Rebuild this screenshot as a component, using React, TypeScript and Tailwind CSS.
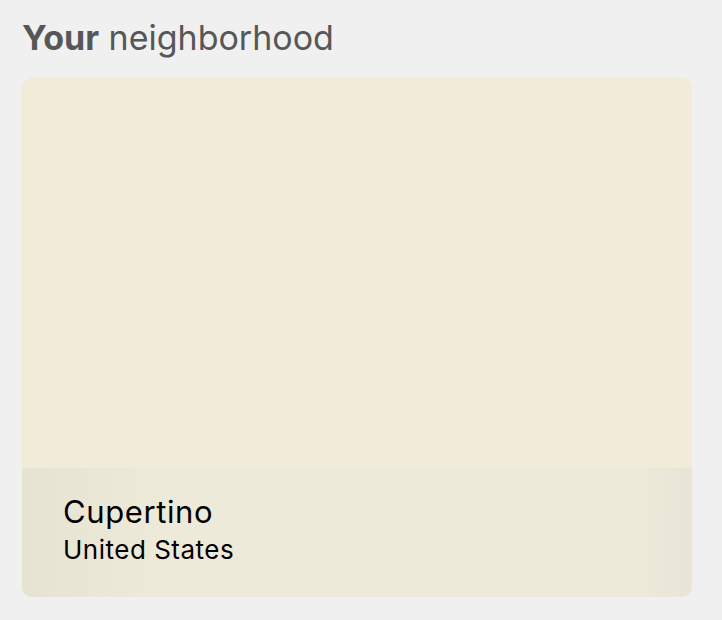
export default function App() {
  return (
    <div
      className="min-h-[620px] w-[722px] bg-[#f0f0f0] px-[22px] pt-[15px]"
      style={{ fontFamily: "Inter, 'Noto Sans', sans-serif" }}
    >
      <h2 className="text-[34px] leading-[46px] tracking-[0px] text-[#575757]">
        <span className="font-bold">Your</span> neighborhood
      </h2>
      <div className="mt-[17px] flex h-[519px] w-[670px] flex-col overflow-hidden rounded-[10px] bg-[#f1ebd8]">
        <div className="flex-1" />
        <div className="relative h-[129px] bg-[#edeada]">
          <div className="absolute inset-y-0 left-0 w-[140px] bg-gradient-to-r from-[#e6e3d2] to-transparent" />
          <div className="absolute inset-y-0 right-0 w-[60px] bg-gradient-to-l from-[#e8e5d6] to-transparent" />
          <div className="relative pl-[41px] pt-[22px] text-black">
            <div className="text-[31px] leading-[44px] tracking-[0.6px]">Cupertino</div>
            <div className="text-[26px] leading-[32px] tracking-[0.5px]">United States</div>
          </div>
        </div>
      </div>
    </div>
  );
}
